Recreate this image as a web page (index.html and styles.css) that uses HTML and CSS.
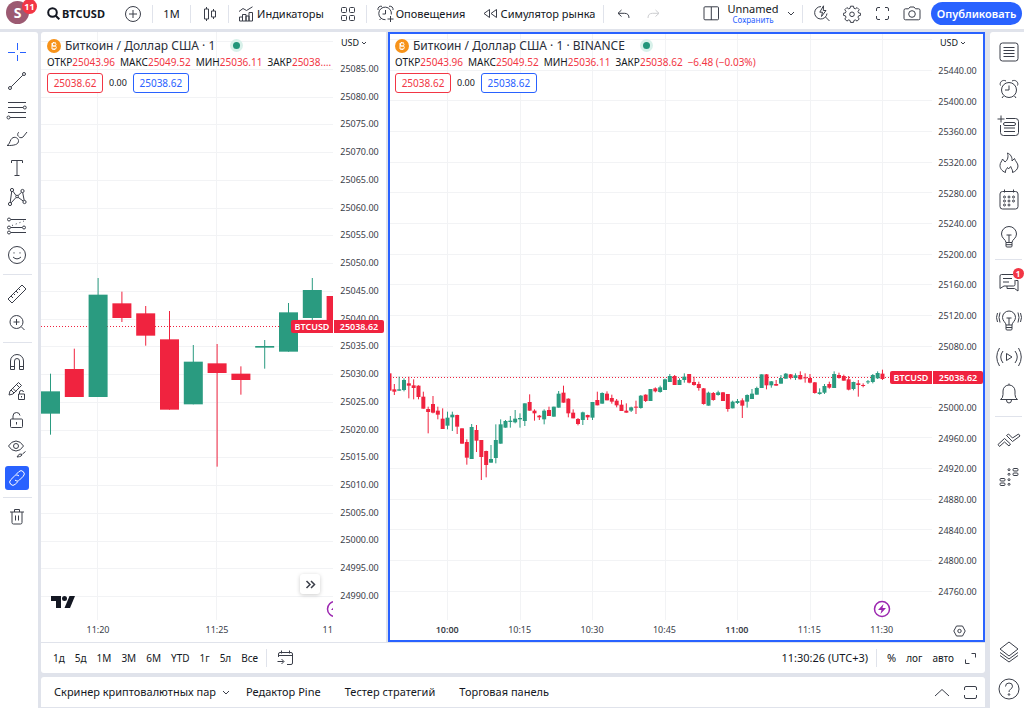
FILE: index.html
```html
<!DOCTYPE html>
<html lang="ru">
<head>
<meta charset="utf-8">
<title>BTCUSD</title>
<link rel="stylesheet" href="styles.css">
</head>
<body>
<div class="app">
  <header class="topbar">
    <button class="avatar" aria-label="Профиль">S<span class="badge">11</span></button>
    <button class="tb symbol"><svg width="13" height="13" viewBox="0 0 13 13"><circle cx="5.5" cy="5.5" r="4.3"/><path d="M8.7 8.7 12.3 12.3"/></svg>BTCUSD</button>
    <button class="tb w38" aria-label="Сравнить"><svg width="18" height="18" viewBox="0 0 18 18"><circle cx="9" cy="9" r="7.5"/><path d="M9 5v8M5 9h8"/></svg></button>
    <span class="vsep"></span>
    <button class="tb w38">1М</button>
    <span class="vsep"></span>
    <button class="tb w38" aria-label="Свечи"><svg width="14" height="16" viewBox="0 0 14 16"><path d="M3.5 1v2M3.5 13v2M1.5 3h4v10h-4zM10.500 3v2M10.500 11v2M8.500 5h4v6h-4z"/></svg></button>
    <span class="vsep"></span>
    <button class="tb indicators"><svg width="16" height="16" viewBox="0 0 16 16"><path d="M1 5.500 5 2.500 8.500 4.500 14.500 .8M1.500 15v-4h3v4zM4.500 15V8.500h3.500V15zM8 15v-5h3v5zM11 15V6.500h3.500V15z"/></svg>Индикаторы</button>
    <button class="tb w38" aria-label="Шаблоны"><svg width="16" height="16" viewBox="0 0 16 16"><rect x="1.500" y="1.500" width="5" height="5" rx="1"/><rect x="9.500" y="1.500" width="5" height="5" rx="1"/><rect x="1.500" y="9.500" width="5" height="5" rx="1"/><rect x="9.500" y="9.500" width="5" height="5" rx="1"/></svg></button>
    <span class="vsep"></span>
    <button class="tb alerts"><svg width="17" height="17" viewBox="0 0 17 17"><path d="M14.300 9.500A6.300 6.300 0 1 0 8.500 14.700M8.500 5v4H5.500M1 5C.5 2.500 2.500.7 5 1.300M12 1.300c2.500-.6 4.500 1.200 4 3.700M13.500 11v6M10.500 14h6M4 13.500 2.500 15"/></svg>Оповещения</button>
    <button class="tb replay"><svg width="15" height="11" viewBox="0 0 15 11"><path d="M6.500 1.500v8L1 5.500zM13.500 1.500v8L8 5.500z"/></svg>Симулятор рынка</button>
    <span class="vsep"></span>
    <button class="tb w30 after-sep" aria-label="Отменить"><svg width="13" height="10" viewBox="0 0 13 10"><path d="M4.500 1 1 4.300 4.500 7.500M1 4.300h6.500q4.500 0 4.500 4.700"/></svg></button>
    <button class="tb w30 dim" aria-label="Повторить"><svg width="13" height="10" viewBox="0 0 13 10"><path d="M8.500 1 12 4.300 8.500 7.500M12 4.300H5.500Q1 4.300 1 9"/></svg></button>
    <span class="grow"></span>
    <button class="tb w30" aria-label="Макет"><svg width="17" height="15" viewBox="0 0 17 15"><rect x="1" y=".8" width="14.500" height="13" rx="1"/><path d="M8.300 1v13"/></svg></button>
    <button class="tb layout-name"><span class="layout-title">Unnamed</span><span class="layout-save">Сохранить</span></button>
    <button class="tb w22" aria-label="Управление макетами"><svg width="8" height="5" viewBox="0 0 8 5"><path d="M1 1 4 4 7 1"/></svg></button>
    <span class="vsep"></span>
    <button class="tb w30 after-sep" aria-label="Быстрый поиск"><svg width="17" height="17" viewBox="0 0 17 17"><path d="M7 1.600A6.200 6.200 0 1 0 13 8.500M11.500 12 15.500 16M9.500 .8 5.800 7.200H8.500L7.500 11.500 12 5.500H9.300z"/></svg></button>
    <button class="tb w30" aria-label="Настройки"><svg width="18" height="18" viewBox="0 0 18 18"><path d="M7.500 1.200h3l.4 2 1.400.6 1.800-1.200 2.100 2.100L15 6.500l.6 1.400 2 .4v2l-2 .5-.6 1.400 1.200 1.800-2.100 2.100-1.800-1.200-1.400.6-.4 1.900h-3l-.4-1.900-1.400-.6-1.800 1.200-2.100-2.100L3 12.200l-.6-1.400-2-.5v-2l2-.4L3 6.500 1.800 4.700l2.100-2.100 1.800 1.200 1.400-.6z"/><circle cx="9" cy="9.300" r="2.300"/></svg></button>
    <button class="tb w30" aria-label="Полный экран"><svg width="15" height="15" viewBox="0 0 15 15"><path d="M1.500 5V3q0-1.500 1.500-1.500h2M10 1.500h2q1.500 0 1.500 1.500v2M13.500 10v2q0 1.500-1.500 1.500h-2M5 13.500H3q-1.500 0-1.500-1.500v-2"/></svg></button>
    <button class="tb w30" aria-label="Снимок"><svg width="18" height="15" viewBox="0 0 18 15"><path d="M2.500 2.800h3L7 1h4l1.500 1.800h3q1.500 0 1.500 1.500v8q0 1.500-1.500 1.500h-13Q1 13.800 1 12.300v-8q0-1.500 1.500-1.500z"/><circle cx="9" cy="8" r="3.300"/></svg></button>
    <button class="publish">Опубликовать</button>
  </header>

  <nav class="rail rail-left">
    <button aria-label="Перекрестие" class="cross"><svg width="20" height="20" viewBox="0 0 20 20"><path d="M1 10.500h7M13 10.500h6M10.500 1v7M10.500 13v6"/></svg></button>
    <button aria-label="Линия"><svg width="20" height="20" viewBox="0 0 20 20"><circle cx="3" cy="17" r="1.500"/><circle cx="17" cy="3" r="1.500"/><path d="M4.200 15.800 15.800 4.200"/></svg></button>
    <button aria-label="Фибоначчи"><svg width="22" height="20" viewBox="0 0 22 20"><path d="M2 2.500h18M2 7.500h15M2 12.500h18M4 17.500h16"/><circle cx="18.800" cy="7.500" r="1.500"/><circle cx="2.500" cy="17.500" r="1.500"/></svg></button>
    <button aria-label="Кисть"><svg width="22" height="18" viewBox="0 0 22 18"><path d="M1 15.500C3.500 14.500 3.500 12 5 9.500 7 6 12 7 12.500 10.500 13 14.500 8 15.700 1 15.500zM12 6C11 3.500 12.500 2.500 13 2M12.500 6.500c1.500 1.800 3.500 1.300 4.500.5L21 2"/></svg></button>
    <button aria-label="Текст"><svg width="14" height="18" viewBox="0 0 14 18"><path d="M1.500 4V1.500h11V4M7 1.500v15M4.500 16.500h5"/></svg></button>
    <button aria-label="Паттерны"><svg width="20" height="20" viewBox="0 0 20 20"><circle cx="5" cy="3" r="1.600"/><circle cx="15.500" cy="4" r="1.600"/><circle cx="3" cy="17" r="1.600"/><circle cx="17.500" cy="15" r="1.600"/><circle cx="10" cy="9.500" r="1.300"/><path d="M4.700 4.600 3.200 15.400M15.700 5.600 17.200 13.400M6 4.300 9 8.500M14.500 5.300 11 8.600M9 10.500 4.200 15.800M11 10.300 16.200 14"/></svg></button>
    <button aria-label="Прогноз"><svg width="22" height="18" viewBox="0 0 22 18"><circle cx="3" cy="2.500" r="1.500"/><circle cx="3" cy="10.500" r="1.500"/><circle cx="3" cy="15.500" r="1.500"/><circle cx="18" cy="10.500" r="1.500"/><path d="M5 2.500h15M5 10.500h11M5 15.500h15"/><path d="M6 8.500 18 4" stroke-dasharray="1 3"/></svg></button>
    <button aria-label="Эмодзи"><svg width="20" height="20" viewBox="0 0 20 20"><circle cx="10" cy="10" r="8.500"/><path d="M6 12q4 3.800 8 0M7 7.300v1.200M13 7.300v1.200"/></svg></button>
    <hr>
    <button aria-label="Линейка"><svg width="20" height="20" viewBox="0 0 20 20"><path d="M1 15 15 1 19 5 5 19zM4 12l2 2M6.500 9.500l1.500 1.500M9 7l2 2M11.500 4.500 13 6"/></svg></button>
    <button aria-label="Увеличить"><svg width="18" height="18" viewBox="0 0 18 18"><circle cx="8.500" cy="8" r="6.500"/><path d="M13.200 12.700 16.500 16M8.500 5v6M5.500 8h6"/></svg></button>
    <hr>
    <button aria-label="Магнит"><svg width="16" height="18" viewBox="0 0 16 18"><path d="M1.500 16.500V8a6.500 6.500 0 0 1 13 0v8.500h-4V8a2.500 2.500 0 0 0-5 0v8.500zM1.500 13.500h4M10.500 13.500h4"/></svg></button>
    <button aria-label="Режим рисования"><svg width="20" height="20" viewBox="0 0 20 20"><path d="M2 14 3 10 11.500 1.500 14.500 4.500 6 13zM4 9l3 3M6 7.500l3 3M9.500 3.500l3 3M11.500 13h6v5.500h-6zM12.500 13v-2q0-1.500 2-1.500T16.500 11M14.500 15v1.500"/></svg></button>
    <button aria-label="Блокировка"><svg width="16" height="18" viewBox="0 0 16 18"><rect x="1.500" y="8" width="12" height="8.500" rx="1"/><path d="M4 8V5q0-3.500 3.500-3.500Q10.500 1.500 11 4.500M7.500 11v2.500"/></svg></button>
    <button aria-label="Скрыть"><svg width="20" height="20" viewBox="0 0 20 20"><path d="M1.500 7Q4.500 2 9 2t7.500 5Q13.500 12 9 12T1.500 7z"/><circle cx="9" cy="7" r="2.500"/><path d="M10 18q2-4 4.500-3 1.500 2.500-4.500 3zM15.500 15 18.500 12.500"/></svg></button>
    <button aria-label="Синхронизация" class="on"><svg width="18" height="18" viewBox="0 0 18 18"><path d="M8 5.500 10.800 2.700a3 3 0 0 1 4.500 4.500L11.500 11a3 3 0 0 1-4.500 0M10 12.500 7.200 15.300a3 3 0 0 1-4.500-4.500L6.500 7A3 3 0 0 1 11 7"/></svg></button>
    <hr>
    <button aria-label="Удалить"><svg width="16" height="18" viewBox="0 0 16 18"><path d="M1 4h14M5.500 4V1.500h5V4M3 4v10.500q0 1.500 1.500 1.500h7q1.500 0 1.500-1.500V4M6.500 7.500v5M9.500 7.500v5"/></svg></button>
  </nav>

  <main class="center">
    <div class="charts">
      <section class="chart chart-a">
        <div class="plot"><svg id="plot-a" class="plot-svg"></svg>
          <div class="legend">
            <div class="title"><svg class="coin" width="14" height="14" viewBox="0 0 14 14"><circle cx="7" cy="7" r="7"/><path d="M5.500 4h2q1.500 0 1.500 1.500T7.500 7H5.500zM5.500 7h2.500q1.300 0 1.300 1.500T8 10H5V4M6.500 3v1M8 3v1M6.200 10v1M7.600 10v1"/></svg><span>Биткоин / Доллар США · 1</span><i class="live"></i></div>
            <div class="ohlc"><span>ОТКР<b>25043.96</b></span><span>МАКС<b>25049.52</b></span><span>МИН<b>25036.11</b></span><span>ЗАКР<b>25038.…</b></span></div>
            <div class="quotes"><button class="sell">25038.62</button><span>0.00</span><button class="buy">25038.62</button></div>
          </div>
          <svg class="tv" width="24" height="12" viewBox="0 0 24 12"><path d="M0 0h10v12H5V5H0z"/><circle cx="13.500" cy="2.500" r="2.500"/><path d="M18.500 0H24l-5 12h-5.500z"/></svg>
          <button class="scroll-end" aria-label="К последнему бару"><svg width="11" height="9" viewBox="0 0 11 9"><path d="M1.500 1 5 4.500 1.500 8M6 1l3.500 3.500L6 8"/></svg></button>
          <span class="price-name">BTCUSD</span>
        </div>
        <div class="price">
          <button class="cur">USD<svg width="6" height="4" viewBox="0 0 6 4"><path d="M1 1 3 3 5 1"/></svg></button>
          <ul class="ticks" id="ticks-a"></ul>
          <span class="price-now">25038.62</span>
        </div>
        <div class="time"><span>11:20</span><span>11:25</span><span>11:30</span></div>
        <div class="corner"></div>
      </section>
      <section class="chart chart-b">
        <div class="plot"><svg id="plot-b" class="plot-svg"></svg>
          <div class="legend">
            <div class="title"><svg class="coin" width="14" height="14" viewBox="0 0 14 14"><circle cx="7" cy="7" r="7"/><path d="M5.500 4h2q1.500 0 1.500 1.500T7.500 7H5.500zM5.500 7h2.500q1.300 0 1.300 1.500T8 10H5V4M6.500 3v1M8 3v1M6.200 10v1M7.600 10v1"/></svg><span>Биткоин / Доллар США · 1 · BINANCE</span><i class="live"></i></div>
            <div class="ohlc"><span>ОТКР<b>25043.96</b></span><span>МАКС<b>25049.52</b></span><span>МИН<b>25036.11</b></span><span>ЗАКР<b>25038.62</b></span><b>−6.48 (−0.03%)</b></div>
            <div class="quotes"><button class="sell">25038.62</button><span>0.00</span><button class="buy">25038.62</button></div>
          </div>
          <span class="price-name">BTCUSD</span>
        </div>
        <div class="price">
          <button class="cur">USD<svg width="6" height="4" viewBox="0 0 6 4"><path d="M1 1 3 3 5 1"/></svg></button>
          <ul class="ticks" id="ticks-b"></ul>
          <span class="price-now">25038.62</span>
        </div>
        <div class="time"><span class="major">10:00</span><span>10:15</span><span>10:30</span><span>10:45</span><span class="major">11:00</span><span>11:15</span><span>11:30</span></div>
        <div class="corner"><svg width="13" height="12" viewBox="0 0 13 12"><path d="M3.500 1h6l2.700 5-2.700 5h-6L.8 6z"/><circle cx="6.500" cy="6" r="1.700"/></svg></div>
      </section>
    </div>
    <div class="ranges">
      <button>1д</button><button>5д</button><button>1М</button><button>3М</button><button>6М</button><button>YTD</button><button>1г</button><button>5л</button><button>Все</button>
      <span class="vsep"></span>
      <button class="goto" aria-label="Перейти к дате"><svg width="17" height="16" viewBox="0 0 17 16"><path d="M1.500 7V4q0-1.500 1.500-1.500h11q1.500 0 1.500 1.500v9q0 1.500-1.500 1.500h-4M1.500 5.500h14M4.500.5v3M12.500.5v3M.5 11.500h6M4.500 9l2.500 2.500L4.500 14"/></svg></button>
      <span class="grow"></span>
      <button class="clock">11:30:26 (UTC+3)</button>
      <span class="vsep"></span>
      <button class="percent">%</button><button>лог</button><button>авто</button>
      <button class="expand" aria-label="Развернуть"><svg width="13" height="13" viewBox="0 0 13 13"><path d="M7.500 1.500h4v4M1.500 7.500v4h4"/></svg></button>
    </div>
    <div class="tabs">
      <button class="tab-screener">Скринер криптовалютных пар<svg width="8" height="5" viewBox="0 0 8 5"><path d="M1 1 4 4 7 1"/></svg></button>
      <button>Редактор Pine</button><button>Тестер стратегий</button><button>Торговая панель</button>
      <span class="grow"></span>
      <button aria-label="Открыть панель"><svg width="16" height="9" viewBox="0 0 16 9"><path d="M1 8 8 1.500 15 8"/></svg></button>
      <button aria-label="Развернуть панель"><svg width="15" height="15" viewBox="0 0 15 15"><path d="M1.500 5V3q0-1.500 1.500-1.500h9q1.500 0 1.500 1.500v2M13.500 10v2q0 1.500-1.500 1.500H3q-1.500 0-1.500-1.500v-2"/></svg></button>
    </div>
  </main>

  <aside class="rail rail-right">
    <button aria-label="Список котировок"><svg width="20" height="20" viewBox="0 0 20 20"><rect x="1" y="1" width="18" height="18" rx="2.500"/><path d="M4.500 5.500h11M4.500 8.500h11M4.500 11.500h11M4.500 14.500h11"/></svg></button>
    <button aria-label="Оповещения"><svg width="20" height="20" viewBox="0 0 20 20"><circle cx="10" cy="11" r="7.500"/><path d="M10 6.500V11H6M1.500 6.500C0 3.500 3.500 0 7 2M13 2c3.500-2 7 1.500 5.500 4.500M4.500 17 3 19M15.500 17l1.500 2"/></svg></button>
    <button aria-label="Окно данных"><svg width="23" height="22" viewBox="0 0 23 22"><path d="M9 3.500h9.500q3 0 3 3v11q0 3-3 3h-12q-3 0-3-3V10M4 .5v7M.5 4h7M7 13h11M7 16.500h11"/><rect x="6.500" y="7.500" width="12" height="3" rx="1.500"/></svg></button>
    <button aria-label="Популярное"><svg width="20" height="22" viewBox="0 0 20 22"><path d="M6.500 20.500C2.500 19 1 16 1 13.500 1 10.500 3 9.500 3.500 7L6 10C9 8 9.500 4.500 8.500 1 11.500 2 13.500 5.500 13 9l2.500-2.500C16 9 19 11 19 14c0 3-2.500 5.500-5.500 6.500.5-2.500-1-3.500-1.800-6L9.500 17l-1-1.500c-1 1.500-2.500 3-2 5z"/></svg></button>
    <button aria-label="Календарь"><svg width="20" height="21" viewBox="0 0 20 21"><rect x="1" y="2.500" width="18" height="17.500" rx="2.500"/><path d="M5.500.5v3M14.500.5v3"/><g><circle cx="5.500" cy="8" r="1"/><circle cx="10" cy="8" r="1"/><circle cx="14.500" cy="8" r="1"/><circle cx="5.500" cy="12" r="1"/><circle cx="10" cy="12" r="1"/><circle cx="14.500" cy="12" r="1"/><circle cx="5.500" cy="16" r="1"/><circle cx="10" cy="16" r="1"/></g></svg></button>
    <button aria-label="Мои идеи"><svg width="18" height="22" viewBox="0 0 18 22"><path d="M6 16.500C6 13.500 1.500 12.500 1.500 8a7.500 7.500 0 0 1 15 0c0 4.500-4.500 5.500-4.500 8.500zM6 16.500V20q0 1 1 1h4q1 0 1-1v-3.500M6 18.700h6M6.500 9h5M9 9v7"/></svg></button>
    <hr>
    <button aria-label="Чаты" class="has-badge"><svg width="20" height="20" viewBox="0 0 20 20"><path d="M14 1.500H2.500Q1 1.500 1 3v12.500l4-2.500h9.500q1.500 0 1.500-1.500V7M4 5.500h9M4 9h6M16.500 7.500H19V18l-3.500-2.500H8V13"/></svg><span class="badge">1</span></button>
    <button aria-label="Идеи"><svg width="26" height="22" viewBox="0 0 26 22"><path d="M10 16c0-2.500-3.500-4-3.500-7.500a6.500 6.500 0 0 1 13 0C19.500 12 16 13.500 16 16zM10 16v4q0 1 1 1h4q1 0 1-1v-4M10 18.500h6M10.500 9h5M13 9v7M4 3.500q-2 5 0 10M1.500 4q-2 4.500 0 9M22 3.500q2 5 0 10M24.500 4q2 4.500 0 9"/></svg></button>
    <button aria-label="Стримы"><svg width="26" height="20" viewBox="0 0 26 20"><path d="M10.500 6.500 16 10l-5.500 3.500zM7 4q-4.500 6 0 12M3.500 1q-5.500 9 0 18M19 4q4.500 6 0 12M22.500 1q5.500 9 0 18"/></svg></button>
    <button aria-label="Уведомления"><svg width="20" height="21" viewBox="0 0 20 21"><path d="M1.500 16.500q2.500-1.500 2.500-5V8a6 6 0 0 1 12 0v3.500q0 3.500 2.500 5zM7.500 17q0 3 2.500 3t2.500-3M10 2V.5"/></svg></button>
    <hr>
    <button aria-label="Заявки"><svg width="24" height="14" viewBox="0 0 24 14"><path d="M11.500 1 15.500 5 21.500 1 23 3 15.500 8.500 9.500 2.500zM1 11.500 7.500 5.500 13.500 11 12 13 7.500 9 2.500 13.500z"/></svg></button>
    <button aria-label="Стакан"><svg width="20" height="20" viewBox="0 0 20 20"><rect x="1" y="11.500" width="5" height="2.500" rx="1"/><rect x="1" y="16" width="5" height="2.500" rx="1"/><rect x="14" y="1.500" width="5" height="2.500" rx="1"/><rect x="14" y="6" width="5" height="2.500" rx="1"/><circle cx="10" cy="2.700" r="1"/><circle cx="10" cy="7.300" r="1"/><circle cx="10" cy="12.700" r="1"/><circle cx="10" cy="17.300" r="1"/></svg></button>
    <span class="grow"></span>
    <button aria-label="Дерево объектов"><svg width="20" height="22" viewBox="0 0 20 22"><path d="M10 1 19 8 10 15 1 8zM1 11.500 10 18l9-6.500M1 14.500 10 21l9-6.500"/></svg></button>
    <button aria-label="Помощь"><svg width="22" height="22" viewBox="0 0 22 22"><circle cx="11" cy="11" r="10"/><path d="M7.500 8.500Q7.500 5 11 5t3.500 3.200q0 1.800-2 3Q11 12.200 11 14"/><circle cx="11" cy="16.500" r=".8"/></svg></button>
  </aside>
</div>
<script src="chart.js"></script>
</body>
</html>
```
FILE: styles.css
```css
* { box-sizing: border-box; }
body {
  margin: 0;
  background: #e0e3eb;
  color: #131722;
  font: 11px/14px "Noto Sans", "Open Sans", sans-serif;
}
button {
  margin: 0; padding: 0; border: 0; background: none;
  font: inherit; color: inherit; cursor: pointer; white-space: nowrap;
  display: flex; align-items: center; justify-content: center;
}
svg { fill: none; stroke: #3a3e49; stroke-width: 1; flex: none; display: block; }
.grow { flex: 1; }
.app {
  height: 100vh;
  display: grid;
  grid-template: 29px 1fr / 38px 1fr 34px;
  gap: 3px;
}

.topbar { grid-column: 1 / -1; background: #fff; display: flex; align-items: center; padding: 0 2px 2px 0; }
.tb { height: 27px; }
.vsep { width: 1px; height: 18px; background: #e0e3eb; flex: none; }
.w38 { width: 37px; }
.w30 { width: 30px; }
.w22 { width: 22px; }
.after-sep { margin-left: 4px; }
.dim { opacity: .25; }
.avatar {
  position: relative; width: 23px; height: 23px; margin: 0 18px 2px 6px;
  border-radius: 50%; background: #9c5a72; color: #fff; font-size: 14px; font-weight: 700; flex: none;
}
.badge {
  position: absolute; top: -2px; right: -8px; min-width: 15px; height: 15px;
  border-radius: 8px; background: #f23645; color: #fff; font-size: 9px; font-weight: 700; line-height: 15px; text-align: center;
}
.symbol { font-weight: 700; gap: 2px; width: 66px; justify-content: flex-start; }
.symbol svg { stroke: #131722; stroke-width: 2; }
.symbol + .w38 { width: 39px; }
.indicators { width: 100px; gap: 3px; padding-left: 4px; }
.alerts { width: 108px; gap: 2px; }
.replay { width: 128px; gap: 3px; }
.layout-name { flex-direction: column; width: 54px; }
.layout-title { font-size: 11px; line-height: 12px; }
.layout-save { font-size: 8px; line-height: 9px; color: #2962ff; }
.publish {
  height: 23px; width: 91px; margin-left: 4px; border-radius: 12px;
  background: #2962ff; color: #fff; font-weight: 600; font-size: 11px;
}

.rail { background: #fff; display: flex; flex-direction: column; align-items: center; }
.rail hr { width: 29px; height: 1px; border: 0; margin: 5px 0 4px; background: #e0e3eb; flex: none; }
.rail-left { border-radius: 0 3px 0 0; padding: 5px 4px 0 0; }
.rail-left button { width: 24px; height: 29px; flex: none; }
.rail-left .cross svg { stroke: #2962ff; }
.rail-left .on { height: 24px; margin: 3px 0 2px; background: #2962ff; border-radius: 3px; }
.rail-left .on svg { stroke: #fff; }
.rail-right { border-radius: 3px 0 0 0; padding: 1px 0 1px 3px; }
.rail-right button { width: 30px; height: 37px; flex: none; }
.rail-right hr { width: 27px; margin: 4px 0; }
.has-badge { position: relative; }
.has-badge .badge { top: 4px; right: 0; min-width: 11px; height: 11px; line-height: 11px; font-size: 8px; }

.center { display: flex; flex-direction: column; min-width: 0; margin-right: 2px; }
.charts { flex: 1; min-height: 0; display: grid; grid-template-columns: 345fr 597fr; gap: 2px; }
.chart {
  background: #fff; min-width: 0; overflow: hidden;
  display: grid; grid-template: 1fr 20px / 1fr 51px;
}
.chart-a { border-radius: 3px 0 0 0; grid-template: 1fr 22px / 1fr 53px; }
.chart-b { border: 2px solid #2962ff; }
.plot { position: relative; overflow: hidden; min-width: 0; }
.plot-svg { width: 100%; height: 100%; }
.grid-line { stroke: #f2f3f5; }
.up { fill: #2a9b80; stroke: none; }
.down { fill: #f0233f; stroke: none; }
.last-line { stroke: #f0233f; stroke-dasharray: 1 2; }
.bolt { stroke: #9c27b0; stroke-width: 1.5; fill: #fff; }
.bolt-mark { fill: #9c27b0; stroke: none; }

.legend { position: absolute; top: 6px; left: 6px; white-space: nowrap; }
.chart-b .legend { top: 4px; left: 5px; }
.title { display: flex; align-items: center; gap: 4px; font-size: 12px; line-height: 15px; color: #2a2e39; }
.coin { fill: #f7931a; stroke: none; }
.coin path { fill: none; stroke: #fff; }
.live { width: 7px; height: 7px; margin-left: 14px; border-radius: 50%; background: #22967a; box-shadow: 0 0 0 3px #d8f1ea; }
.ohlc { display: flex; gap: 5px; font-size: 10px; line-height: 14px; margin-top: 2px; }
.ohlc b { font-weight: 400; color: #f23645; }
.quotes { display: flex; align-items: center; gap: 6px; margin-top: 4px; font-size: 9px; }
.quotes button { width: 56px; height: 20px; border: 1px solid; border-radius: 3px; background: #fff; font-size: 10px; }
.sell { color: #f23645; }
.buy { color: #2962ff; }
.tv { position: absolute; left: 10px; bottom: 12px; fill: #131722; stroke: none; }
.scroll-end {
  position: absolute; right: 13px; bottom: 26px; width: 20px; height: 20px;
  background: #fff; border-radius: 3px; box-shadow: 0 1px 4px #0003;
}
.scroll-end svg { stroke-width: 1.5; }
.price-name, .price-now {
  position: absolute; height: 13px; background: #f0233f; color: #fff;
  font-size: 9px; line-height: 13px; font-weight: 600; text-align: center;
}
.price-name { right: 0; width: 42px; border-radius: 2px 0 0 2px; }
.price-now { left: 1px; width: 50px; border-radius: 0 2px 2px 0; }
.chart-a .price-name, .chart-a .price-now { top: 288px; }
.chart-b .price-name, .chart-b .price-now { top: 337px; }
.price { position: relative; padding-top: 4px; font-size: 9px; }
.cur { font-size: 9px; line-height: 13px; gap: 2px; margin-left: 8px; }
.ticks {
  list-style: none; margin: 13px 0 0; padding: 0; height: 541px; width: 53px; color: #3a3e49;
  display: flex; flex-direction: column; justify-content: space-between; text-align: center;
}
.chart-b .price { padding-top: 2px; }
.chart-b .ticks { margin-top: 15px; height: 535px; width: 51px; }
.time { display: flex; font-size: 9px; line-height: 20px; overflow: hidden; color: #3a3e49; }
.time span { text-align: center; flex: none; }
.chart-a .time span:first-child { width: 114px; }
.chart-a .time span + span { width: 124px; }
.chart-a .time span:last-child { width: 110px; }
.chart-b .time { padding: 0 14px 0 21px; }
.chart-b .time span { flex: 1; }
.time .major { font-weight: 600; }
.corner { display: flex; align-items: center; justify-content: center; padding: 2px 0 0 4px; }

.ranges { height: 31px; background: #fff; border-top: 1px solid #e0e3eb; border-radius: 0 0 3px 3px; display: flex; align-items: center; padding: 0 8px 0 12px; gap: 10px; font-size: 10px; }
.ranges .vsep { margin-left: -2px; }
.clock { font-size: 11px; }
.percent { font-size: 11px; }
.tabs { height: 31px; margin-top: 4px; background: #fff; border-bottom: 1px solid #e0e3eb; border-radius: 3px 3px 0 0; display: flex; align-items: center; padding: 0 7px 0 13px; gap: 24px; font-size: 11px; }
.tab-screener { gap: 6px; margin-right: -8px; }
.tabs button:last-child { margin-left: -11px; }
```
FILE: chart.js
```js
const NS = "http://www.w3.org/2000/svg";
function add(svg, tag, cls, attrs) {
  const el = document.createElementNS(NS, tag);
  el.setAttribute("class", cls);
  for (const k in attrs) el.setAttribute(k, attrs[k]);
  svg.appendChild(el);
  return el;
}

/* Each bar: direction, high, body top, body bottom, low (thirds of a pixel). */
const barsA = "g341,394,461,524 r266,327,411,411 g54,104,411,411 r95,130,174,186 r138,160,227,257 r153,238,449,449 g255,305,433,433 r252,310,339,620 r319,341,360,404 g240,258,263,326 g129,157,275,275 g54,90,174,180 r108,108,205,205";
const barsB = "r40,40,92,92 r72,88,95,105 g50,88,92,92 g55,60,90,94 r50,70,77,115 r58,76,84,118 r76,77,111,118 r95,110,146,146 r140,147,156,220 r108,132,158,160 r140,152,164,178 r145,176,207,207 g155,173,197,208 g155,164,172,213 r164,165,200,222 r205,205,251,251 r238,246,293,314 g192,201,297,297 r195,210,242,276 r240,240,291,360 r272,273,315,352 g255,297,308,308 g193,240,294,310 g178,193,251,251 g180,183,203,203 g168,182,186,203 g150,176,187,190 g160,174,178,203 g130,130,183,198 r103,126,152,152 r148,152,160,182 r165,167,172,180 g148,152,178,193 r140,150,168,168 g140,140,170,170 g93,101,143,143 r77,98,128,128 r115,116,160,172 r148,158,175,175 r174,177,192,196 g155,157,180,195 r164,165,172,180 g126,126,173,180 r95,120,136,136 g97,99,131,131 r94,101,121,121 r104,114,125,131 r117,122,136,142 r120,134,153,153 r130,152,158,158 g140,142,152,156 r122,140,143,162 g105,107,144,146 r103,104,123,126 g87,87,123,123 r82,85,94,97 g77,82,96,98 g56,58,90,90 g42,48,66,66 r45,48,75,75 g55,60,75,75 g40,50,60,68 r42,42,68,70 r50,66,75,77 r65,72,84,92 r84,85,132,134 g95,98,137,137 r96,99,120,122 g92,97,105,107 r96,97,123,123 r102,102,147,155 g122,125,145,145 g117,123,129,132 r115,121,137,174 g103,105,125,143 g87,101,117,117 g80,84,104,104 g43,43,84,84 r42,43,76,88 g63,64,76,83 r60,72,77,77 g45,54,71,71 g39,41,56,56 r42,43,53,58 g40,46,54,60 r34,45,58,58 r40,52,55,68 r42,54,68,70 r66,67,99,101 g85,97,102,104 g72,78,98,102 r65,72,83,86 g34,42,84,84 r38,45,54,56 r44,48,62,62 r48,58,89,91 g65,66,87,91 r60,70,75,110 r70,75,78,82 g60,64,67,72 g42,45,66,70 g34,39,55,57 r29,41,57,60";

function draw(id, c) {
  const svg = document.getElementById(id);
  for (let i = 0; i < c.rows; i++) {
    const y = Math.round(c.top + i * c.rowStep) + 0.5;
    add(svg, "line", "grid-line", { x1: 0, x2: "100%", y1: y, y2: y });
  }
  for (let i = 0; i < c.cols; i++) {
    const x = Math.round(c.left + i * c.colStep) + 0.5;
    add(svg, "line", "grid-line", { x1: x, x2: x, y1: 0, y2: "100%" });
  }
  add(svg, "line", "last-line", { x1: 0, x2: "100%", y1: c.last, y2: c.last });
  c.bars.split(" ").forEach((s, i) => {
    const cls = s[0] === "g" ? "up" : "down";
    const [h, t, b, l] = s.slice(1).split(",").map(v => c.base + v / 3);
    const x = c.first + i * c.step;
    add(svg, "rect", cls, { x: x - 0.5, y: h, width: 1, height: l - h });
    add(svg, "rect", cls, { x: x - c.width / 2, y: t, width: c.width, height: Math.max(b - t, 1) });
  });
  const g = add(svg, "g", "", { transform: `translate(${c.boltX} ${c.boltY})` });
  add(g, "circle", "bolt", { r: 7.5 });
  add(g, "path", "bolt-mark", { d: "M1.500-5-4 1h3.500L-1.500 5 4-1H.5z" });
}
function ticks(id, from, step, n) {
  const ul = document.getElementById(id);
  for (let i = 0; i < n; i++) {
    const li = document.createElement("li");
    li.textContent = (from - i * step).toFixed(2);
    ul.appendChild(li);
  }
}
draw("plot-a", { bars: barsA, top: 9, rowStep: 27.75, rows: 21, left: 56, colStep: 119, cols: 3, last: 294.5, base: 228, first: 9.5, step: 23.8, width: 19, boltX: 294, boltY: 577 });
draw("plot-b", { bars: barsB, top: 5.2, rowStep: 30.63, rows: 19, left: 57, colStep: 72.5, cols: 7, last: 343.5, base: 326, first: -0.5, step: 4.833, width: 4, boltX: 492, boltY: 575 });
ticks("ticks-a", 25085, 5, 20);
ticks("ticks-b", 25440, 40, 18);
```
